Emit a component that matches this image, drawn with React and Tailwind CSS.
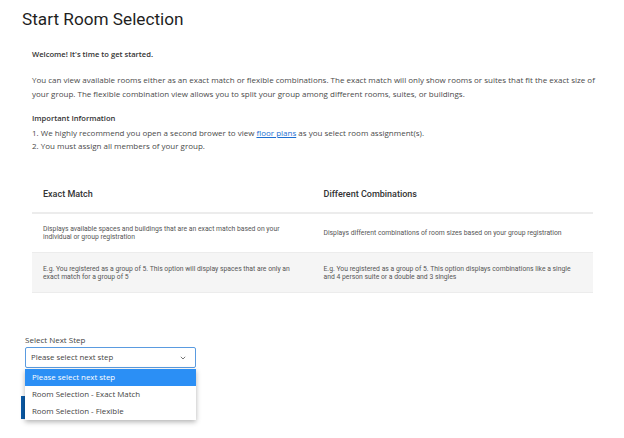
import React from "react";

const os = { fontFamily: '"Open Sans", "Liberation Sans", sans-serif' };
const rb = { fontFamily: 'Roboto, "Liberation Sans", sans-serif' };

export default function App() {
  return (
    <div className="relative w-[624px] h-[438px] overflow-hidden bg-white">
      <h1
        className="pt-[8px] pl-[22px] h-[31px] text-[17.2px] leading-[23px] text-[#1f1f1f] font-normal"
        style={rb}
      >
        Start Room Selection
      </h1>

      <div className="pl-[32px] w-[604px] text-[8px] leading-[13.4px] text-[#4a4a4a]" style={os}>
        <p className="mt-[17px] text-[7.6px] font-semibold text-[#333]">Welcome! It's time to get started.</p>
        <p className="mt-[12px]">
          You can view available rooms either as an exact match or flexible combinations. The exact match will only
          show rooms or suites that fit the exact size of your group. The flexible combination view allows you to
          split your group among different rooms, suites, or buildings.
        </p>
        <p className="mt-[12px] text-[7.6px] font-semibold text-[#333]">Important Information</p>
        <p>
          1. We highly recommend you open a second brower to view{" "}
          <a className="text-[#1d6fd1] underline">floor plans</a> as you select room assignment(s).
        </p>
        <p>2. You must assign all members of your group.</p>
      </div>

      <div className="ml-[32px] mt-[20.6px] w-[561px]" style={rb}>
        <div className="grid grid-cols-2 h-[41px] border-b-2 border-[#ececec] pt-[4px] text-[9px] font-medium text-[#333]">
          <div className="flex items-center pl-[11px]">Exact Match</div>
          <div className="flex items-center pl-[11px]">Different Combinations</div>
        </div>
        <div className="grid grid-cols-2 h-[39px] border-b border-[#ececec] text-[6.8px] leading-[8px] text-[#555]">
          <div className="flex items-center pl-[11px] pr-[20px]">
            Displays available spaces and buildings that are an exact match based on your individual or group
            registration
          </div>
          <div className="flex items-center pl-[11px] pr-[12px]">
            Displays different combinations of room sizes based on your group registration
          </div>
        </div>
        <div className="grid grid-cols-2 h-[40px] bg-[#f5f5f5] border-b border-[#ececec] text-[6.8px] leading-[8px] text-[#555]">
          <div className="flex items-center pl-[11px] pr-[20px]">
            E.g. You registered as a group of 5. This option will display spaces that are only an exact match for a
            group of 5
          </div>
          <div className="flex items-center pl-[11px] pr-[12px]">
            E.g. You registered as a group of 5. This option displays combinations like a single and 4 person suite or
            a double and 3 singles
          </div>
        </div>
      </div>

      <div className="mt-[41px]" style={os}>
        <div className="pl-[25px] text-[8px] leading-[12px] text-[#444]">Select Next Step</div>
        <div className="relative ml-[25px] mt-[1px] w-[171px]">
          <div className="flex items-center justify-between h-[21px] border border-[#5a9be0] rounded-[2px] bg-white pl-[5px] pr-[9px] text-[7.8px] text-[#444]">
            <span>Please select next step</span>
            <svg width="6" height="4" viewBox="0 0 6 4" className="text-[#777]">
              <path d="M0.8 0.8 L3 3 L5.2 0.8" fill="none" stroke="currentColor" strokeWidth="1" />
            </svg>
          </div>
          <div className="absolute left-0 top-[22px] z-10 w-[171px] bg-white shadow-[0_2px_5px_rgba(0,0,0,0.3)] text-[7.9px] text-[#444]">
            <div className="flex items-center h-[17px] pl-[7px] bg-[#2b8ff5] text-white">Please select next step</div>
            <div className="flex items-center h-[17px] pl-[7px]">Room Selection - Exact Match</div>
            <div className="flex items-center h-[17px] pl-[7px]">Room Selection - Flexible</div>
          </div>
        </div>
        <div className="ml-[21px] mt-[28px] w-[110px] h-[23px] bg-[#0b5aa6]" />
      </div>
    </div>
  );
}
